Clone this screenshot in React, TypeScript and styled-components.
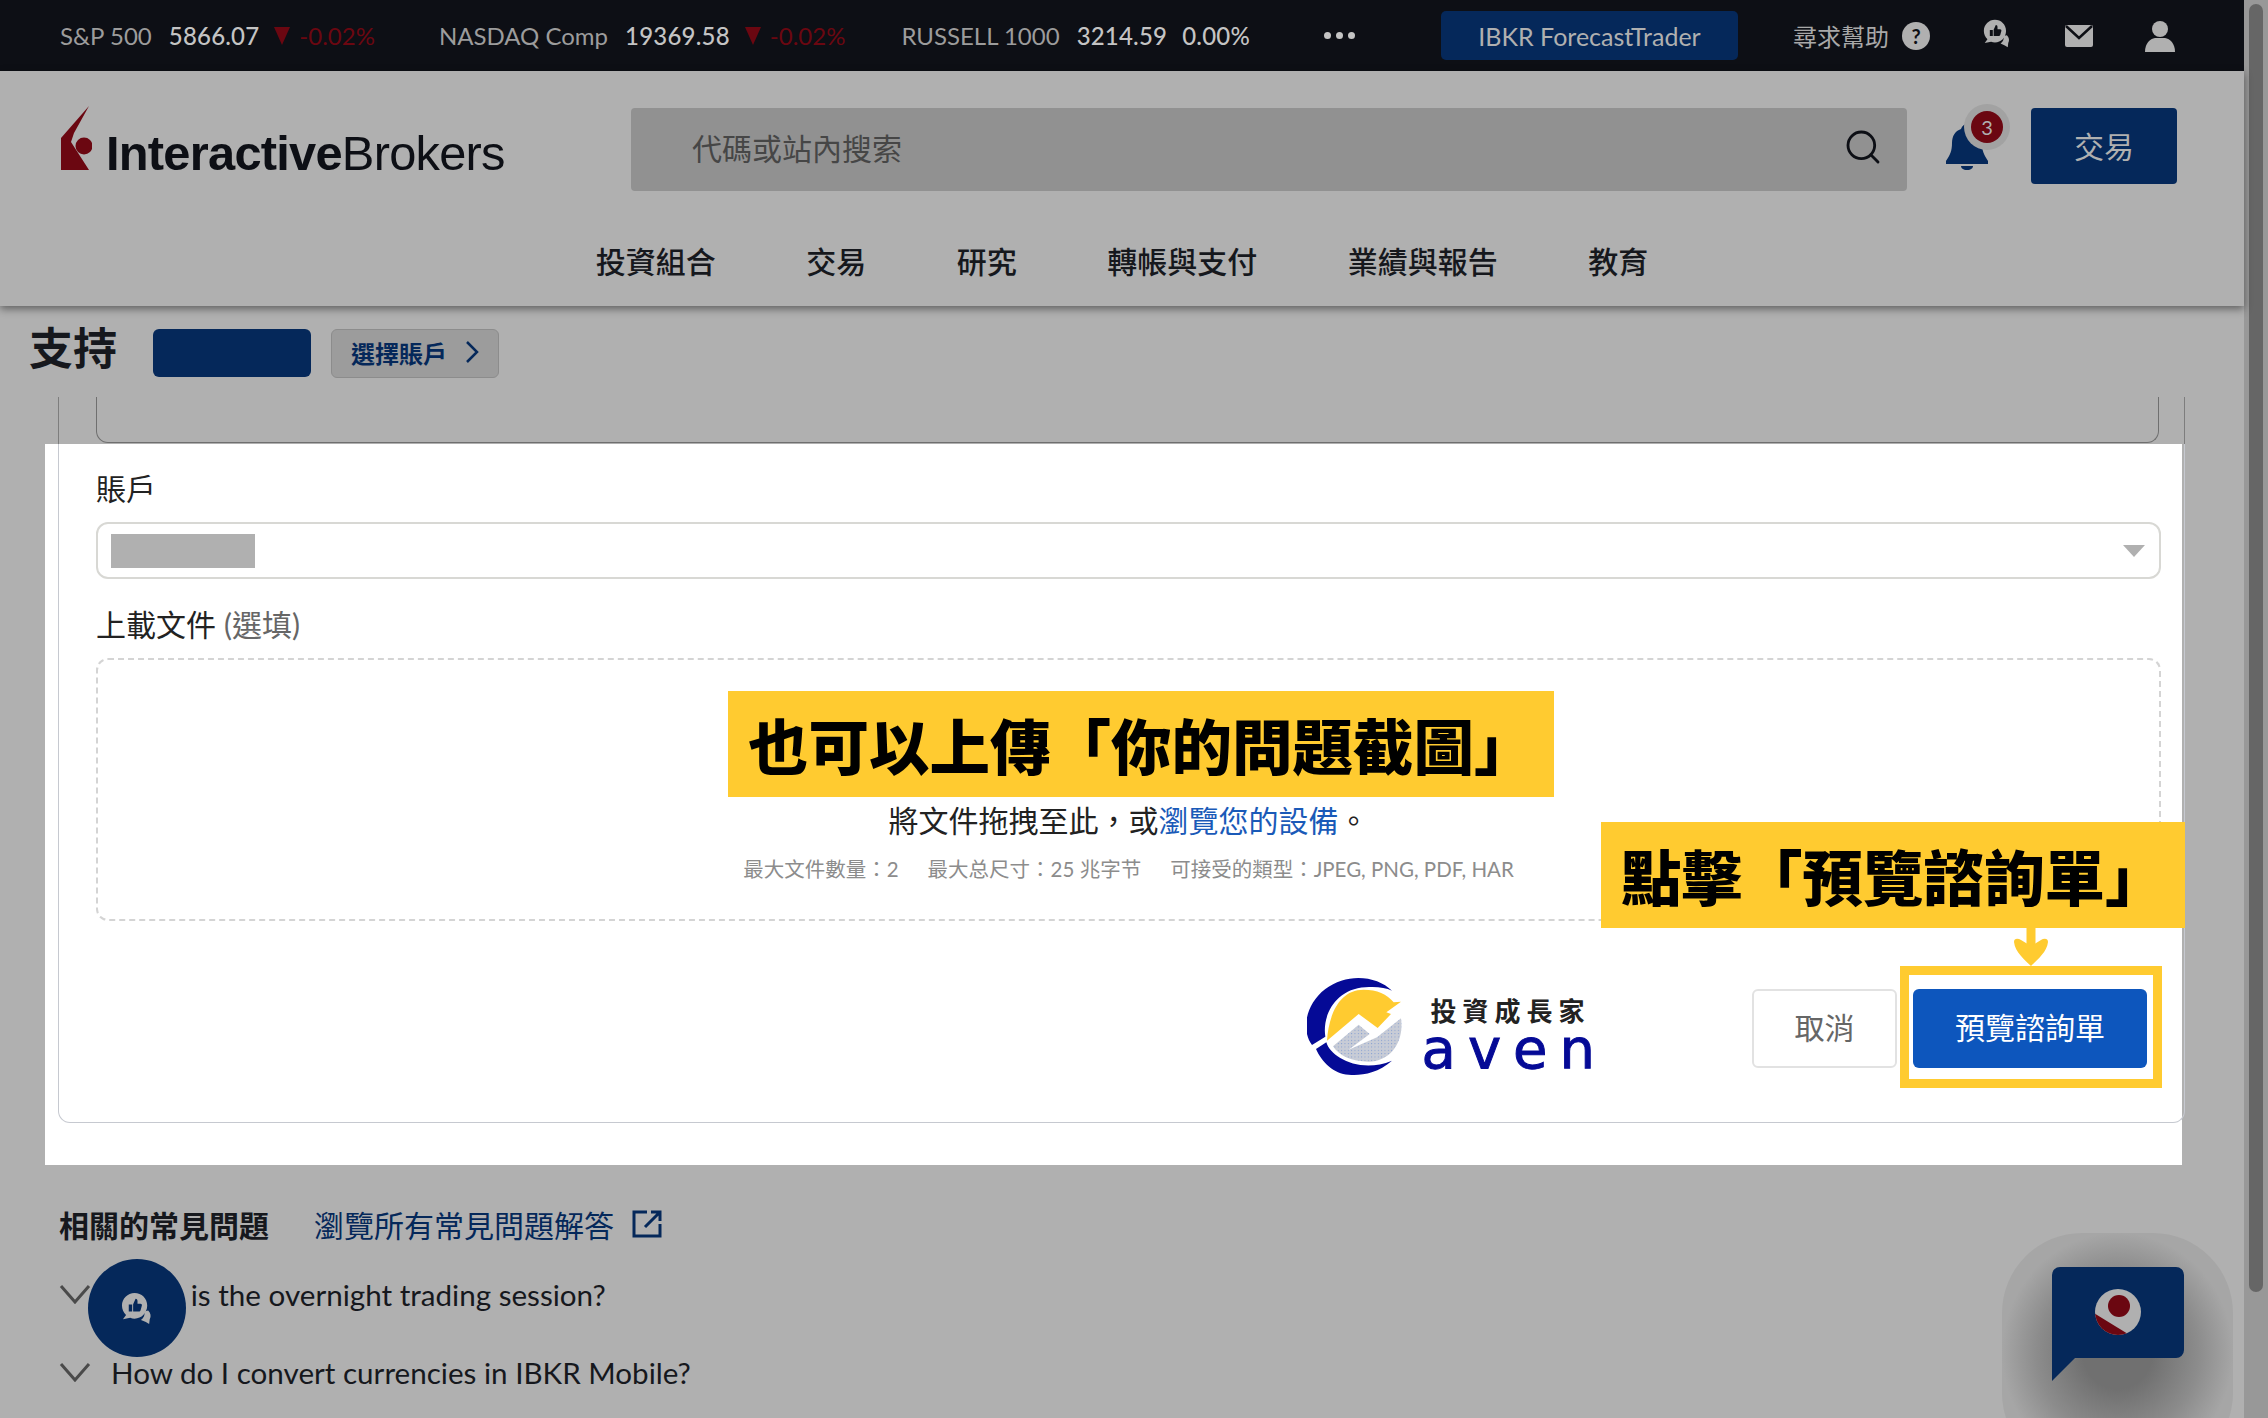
import React from "react";
import styled, { createGlobalStyle } from "styled-components";
import { Search } from "lucide-react";

const DIM = "#b0b0b0";
const NAVY = "#05285a";
const RED = "#6b0711";
const YELLOW = "#ffcb30";
const FONT = `Lato, "Noto Sans CJK TC", sans-serif`;

const GlobalStyle = createGlobalStyle`
  html, body {
    margin: 0;
    padding: 0;
    height: 1418px;
    overflow: hidden;
    background: ${DIM};
    font-family: ${FONT};
  }
  * { box-sizing: border-box; }
`;

const Page = styled.div`
  position: relative;
  display: flex;
  width: 2268px;
  height: 1418px;
  overflow: hidden;
`;

const Content = styled.div`
  width: 2244px;
  display: flex;
  flex-direction: column;
`;

const ScrollTrack = styled.div`
  width: 24px;
  height: 100%;
  background: #989898;
  padding: 4px 5px 0;
`;

const ScrollThumb = styled.div`
  width: 14px;
  height: 1288px;
  border-radius: 7px;
  background: #666;
`;

/* top ticker bar */
const TopBar = styled.div`
  height: 71px;
  flex: none;
  background: #0d0f15;
  display: flex;
  align-items: center;
  padding: 0 68px 0 60px;
  font-size: 24px;
  color: #9c9c9c;
  white-space: nowrap;
`;

const Ticker = styled.div<{ $after: number }>`
  display: flex;
  align-items: center;
  gap: 15px;
  margin-right: ${(p) => p.$after}px;
  flex: none;
`;

const TickerName = styled.span`
  margin-right: 2px;
`;

const TickerValue = styled.span`
  color: #c4c4c4;
  font-weight: 500;
  letter-spacing: 0.2px;
`;

const TickerChange = styled.span`
  color: ${RED};
  margin-left: -6px;
`;

const DownMark = styled.span`
  width: 0;
  height: 0;
  border-left: 8px solid transparent;
  border-right: 8px solid transparent;
  border-top: 18px solid ${RED};
`;

const Dots = styled.div`
  display: flex;
  flex: none;
  gap: 5px;
  margin-left: auto;
  margin-right: 86px;
`;

const Dot = styled.span`
  width: 7px;
  height: 7px;
  border-radius: 50%;
  background: #c4c4c4;
`;

const ForecastButton = styled.div`
  width: 297px;
  height: 49px;
  flex: none;
  background: ${NAVY};
  color: ${DIM};
  border-radius: 5px;
  display: flex;
  align-items: center;
  justify-content: center;
  font-size: 25px;
`;

const HelpText = styled.span`
  margin-left: 55px;
  color: #a8a8a8;
  font-size: 24px;
  flex: none;
`;

const HelpBadge = styled.span`
  margin-left: 13px;
  width: 28px;
  height: 28px;
  flex: none;
  border-radius: 50%;
  background: ${DIM};
  color: #0d0f15;
  font-size: 20px;
  font-weight: 700;
  display: flex;
  align-items: center;
  justify-content: center;
`;

const TopIcon = styled.svg<{ $left: number }>`
  margin-left: ${(p) => p.$left}px;
  flex: none;
`;

/* main header */
const Header = styled.header`
  height: 235px;
  flex: none;
  background: ${DIM};
  box-shadow: 0 3px 8px rgba(0, 0, 0, 0.45);
  position: relative;
  display: flex;
  flex-direction: column;
`;

const HeaderRow = styled.div`
  display: flex;
  align-items: flex-start;
  padding: 37px 68px 0 60px;
`;

const Logo = styled.div`
  width: 571px;
  flex: none;
  display: flex;
  align-items: flex-end;
  height: 65px;
  gap: 14px;
  margin-top: -2px;
`;

const LogoText = styled.div`
  font-family: "Liberation Sans", Arial, sans-serif;
  font-size: 48.8px;
  line-height: 36px;
  letter-spacing: -0.75px;
  color: #0d0f15;
  white-space: nowrap;
  b { font-weight: 700; }
`;

const SearchBox = styled.div`
  width: 1276px;
  height: 83px;
  flex: none;
  background: #919191;
  border-radius: 4px;
  display: flex;
  align-items: center;
  justify-content: space-between;
  padding: 0 24px 5px 61px;
  color: #464646;
  font-size: 30px;
  svg { color: #0d0f15; }
`;

const BellWrap = styled.div`
  position: relative;
  width: 60px;
  height: 62px;
  margin: 16px 0 0 38px;
  flex: none;
`;

const BellBadge = styled.span`
  position: absolute;
  left: 26px;
  top: -13px;
  width: 32px;
  height: 32px;
  border-radius: 50%;
  background: ${RED};
  box-shadow: 0 0 0 7px #a2a2a2;
  color: ${DIM};
  font-size: 20px;
  display: flex;
  align-items: center;
  justify-content: center;
`;

const TradeButton = styled.div`
  width: 146px;
  height: 76px;
  margin-left: 26px;
  padding-bottom: 3px;
  flex: none;
  background: ${NAVY};
  color: ${DIM};
  border-radius: 4px;
  font-size: 30px;
  display: flex;
  align-items: center;
  justify-content: center;
`;

const Nav = styled.nav`
  display: flex;
  justify-content: center;
  gap: 90.5px;
  margin-top: 48px;
  font-size: 30px;
  font-weight: 500;
  line-height: 44px;
  color: #16181d;
`;

/* sub header */
const SubHeader = styled.div`
  height: 91px;
  flex: none;
  display: flex;
  align-items: flex-start;
  padding: 23px 0 0 29px;
`;

const PageTitle = styled.h1`
  margin: -10px 0 0;
  font-size: 44px;
  line-height: 58px;
  font-weight: 700;
  color: #16181d;
`;

const AccountBlock = styled.div`
  width: 158px;
  height: 48px;
  margin-left: 36px;
  background: ${NAVY};
  border-radius: 6px;
`;

const AccountSelect = styled.div`
  width: 168px;
  height: 49px;
  margin-left: 20px;
  padding: 0 0 3px 19px;
  background: #9c9c9c;
  border: 1px solid #8c8c8c;
  border-radius: 6px;
  color: ${NAVY};
  font-size: 24px;
  font-weight: 700;
  display: flex;
  align-items: center;
  gap: 18px;
`;

/* grey stub of the form above the white hole */
const Stub = styled.div`
  height: 47px;
  flex: none;
  margin: 0 59px 0 58px;
  padding: 0 25px 0 37px;
  border-left: 1px solid #7d7d7d;
  border-right: 1px solid #7d7d7d;
`;

const StubBox = styled.div`
  height: 46px;
  border: 1px solid #6f6f6f;
  border-top: none;
  border-radius: 0 0 12px 12px;
`;

const WhitePanel = styled.div`
  height: 721px;
  flex: none;
  margin: 0 62px 0 45px;
  background: #fff;
  display: flex;
  align-items: flex-start;
  padding-left: 13px;
`;

const Card = styled.div`
  width: 2127px;
  height: 679px;
  flex: none;
  margin-right: -3px;
  border: 1px solid #c6c9d0;
  border-top: none;
  border-radius: 0 0 12px 12px;
  padding: 24px 23px 0 37px;
`;

const FieldLabel = styled.div`
  font-size: 30px;
  line-height: 40px;
  color: #222;
`;

const OptionalMark = styled.span`
  color: #666;
  font-size: 30px;
  margin-left: 8px;
`;

const SelectField = styled.div`
  height: 57px;
  margin: 14px 0 25px;
  border: 2px solid #d8d8d4;
  border-radius: 12px;
  display: flex;
  align-items: center;
  justify-content: space-between;
  padding: 0 14px 0 13px;
`;

const RedactedValue = styled.div`
  width: 144px;
  height: 34px;
  background: ${DIM};
`;

const Caret = styled.span`
  width: 0;
  height: 0;
  border-left: 11px solid transparent;
  border-right: 11px solid transparent;
  border-top: 12px solid #b0b0b0;
`;

const DropZone = styled.div`
  height: 263px;
  margin-top: 14px;
  border: 2px dashed #d4d4d4;
  border-radius: 12px;
  display: flex;
  flex-direction: column;
  align-items: center;
  padding-top: 139px;
`;

const DropText = styled.div`
  font-size: 30px;
  line-height: 42px;
  color: #222;
`;

const DropLink = styled.span`
  color: #1a5ab8;
`;

const DropHints = styled.div`
  display: flex;
  gap: 29px;
  margin-top: 13px;
  font-size: 20.5px;
  line-height: 30px;
  color: #8c8c8c;
`;

const ActionRow = styled.div`
  display: flex;
  align-items: flex-start;
  margin-top: 68px;
  justify-content: flex-end;
  padding-right: 14px;
`;

const AvenLogo = styled.div`
  display: flex;
  align-items: flex-start;
  margin: -12px 145px 0 0;
  gap: 29px;
`;

const AvenWords = styled.div`
  display: flex;
  flex-direction: column;
  margin-top: 19px;
`;

const AvenSlogan = styled.div`
  font-size: 26px;
  line-height: 30px;
  font-weight: 700;
  letter-spacing: 6px;
  color: #222;
`;

const AvenMark = styled.div`
  font-family: "DejaVu Sans", sans-serif;
  font-size: 56px;
  line-height: 46px;
  letter-spacing: 12px;
  color: #050a96;
  -webkit-text-stroke: 1px #050a96;
  margin-left: -9px;
`;

const CancelButton = styled.div`
  width: 145px;
  height: 79px;
  padding-bottom: 6px;
  border: 2px solid #e2e2e2;
  border-radius: 6px;
  color: #666;
  font-size: 30px;
  display: flex;
  align-items: center;
  justify-content: center;
`;

const PreviewButton = styled.div`
  width: 234px;
  height: 79px;
  padding-bottom: 6px;
  margin-left: 16px;
  background: #0d56bd;
  color: #fff;
  border-radius: 6px;
  font-size: 30px;
  display: flex;
  align-items: center;
  justify-content: center;
`;

/* faq list under the hole */
const Faq = styled.section`
  padding: 39px 0 0 59px;
`;

const FaqHead = styled.div`
  display: flex;
  align-items: center;
  height: 40px;
  font-size: 30px;
`;

const FaqTitle = styled.div`
  font-weight: 700;
  color: #16181d;
  margin-right: 45px;
`;

const FaqLink = styled.div`
  color: ${NAVY};
  margin-right: 18px;
`;

const FaqRow = styled.div<{ $gap: number }>`
  display: flex;
  align-items: center;
  height: 40px;
  margin-top: ${(p) => p.$gap}px;
  gap: 20px;
  font-size: 29.6px;
  color: #16181d;
`;

/* floating things */
const FloatCircle = styled.div`
  position: absolute;
  left: 88px;
  top: 1259px;
  width: 98px;
  height: 98px;
  border-radius: 50%;
  background: ${NAVY};
  display: flex;
  align-items: center;
  justify-content: center;
`;

const ChatHalo = styled.div`
  position: absolute;
  left: 2002px;
  top: 1233px;
  width: 231px;
  height: 240px;
  border-radius: 80px;
  background: radial-gradient(closest-side, #707070 30%, #8c8c8c 70%, #a6a6a6 100%);
`;

const ChatBubble = styled.svg`
  position: absolute;
  left: 2052px;
  top: 1267px;
`;

const Callout = styled.div<{ $left: number; $top: number; $width: number }>`
  position: absolute;
  left: ${(p) => p.$left}px;
  top: ${(p) => p.$top}px;
  width: ${(p) => p.$width}px;
  height: 106px;
  background: ${YELLOW};
  color: #000;
  font-family: "Noto Sans CJK TC", sans-serif;
  font-weight: 900;
  font-size: 60.5px;
  line-height: 106px;
  white-space: nowrap;
  padding-left: 20px;
`;

const Highlight = styled.div`
  position: absolute;
  left: 1900px;
  top: 966px;
  width: 262px;
  height: 122px;
  border: 9px solid ${YELLOW};
`;

const CalloutArrow = styled.svg`
  position: absolute;
  left: 2013px;
  top: 928px;
`;

const ChatThumbIcon = ({ size, fg, bg }: { size: number; fg: string; bg: string }) => (
  <svg width={size} height={size} viewBox="0 0 34 34">
    <path
      d="M14 1C6.800 1 1 6.800 1 14c0 3.800 1.600 7.200 4.200 9.600L2 28l7.500-1.400c1.400.6 2.900.9 4.500.9 7.200 0 13-6 13-13.500S21.200 1 14 1z"
      fill={fg}
    />
    <path
      d="M24 20c.9 3.600-.5 6.500-3.400 8.800l5 2.200 3.400 2 .6-5c1.700-3 1-6.500-1.600-9z"
      fill={fg}
    />
    <path
      d="M8 13h3.500v7H8zM12.500 20v-7.500l2.500-5.500c1.500 0 2 1 2 2.400V12h3c1.200 0 1.800.9 1.500 2l-1.300 4.700c-.3.8-.9 1.300-1.700 1.300z"
      fill={bg}
    />
  </svg>
);

const ExternalIcon = () => (
  <svg width="30" height="28" viewBox="0 0 30 28" fill="none" stroke={NAVY} strokeWidth="3">
    <path d="M15 2H2v24h26V14" />
    <path d="M13 17 28 2M19 2h9v9" />
  </svg>
);

const FaqChevron = () => (
  <svg width="32" height="20" viewBox="0 0 32 20" fill="none" stroke="#4a4a4a" strokeWidth="3">
    <path d="M2 2l14 16L30 2" />
  </svg>
);

const tickers = [
  { name: "S&P 500", value: "5866.07", change: "-0.02%", down: true, after: 64 },
  { name: "NASDAQ Comp", value: "19369.58", change: "-0.02%", down: true, after: 56 },
  { name: "RUSSELL 1000", value: "3214.59", change: "0.00%", down: false, after: 0 },
];

const navItems = ["投資組合", "交易", "研究", "轉帳與支付", "業績與報告", "教育"];

const App = () => {
  return (
    <Page>
      <GlobalStyle />
      <Content>
        <TopBar>
          {tickers.map((t) => (
            <Ticker key={t.name} $after={t.after}>
              <TickerName>{t.name}</TickerName>
              <TickerValue>{t.value}</TickerValue>
              {t.down && <DownMark />}
              {t.down ? <TickerChange>{t.change}</TickerChange> : <TickerValue>{t.change}</TickerValue>}
            </Ticker>
          ))}
          <Dots>
            <Dot />
            <Dot />
            <Dot />
          </Dots>
          <ForecastButton>IBKR ForecastTrader</ForecastButton>
          <HelpText>尋求幫助</HelpText>
          <HelpBadge>?</HelpBadge>
          <TopIcon as="div" $left={53}>
            <ChatThumbIcon size={29} fg={DIM} bg="#0d0f15" />
          </TopIcon>
          <TopIcon $left={53} width="28" height="22" viewBox="0 0 28 22">
            <rect width="28" height="22" rx="2" fill={DIM} />
            <path d="M1 1l13 12L27 1" fill="none" stroke="#0d0f15" strokeWidth="2.500" />
          </TopIcon>
          <TopIcon $left={51} width="32" height="32" viewBox="0 0 32 32">
            <circle cx="16" cy="9" r="8" fill={DIM} />
            <path d="M1 32c0-9 5-13 10-14h10c5 1 10 5 10 14z" fill={DIM} />
          </TopIcon>
        </TopBar>

        <Header>
          <HeaderRow>
            <Logo>
              <svg width="32" height="65" viewBox="0 0 32 65">
                <path d="M29 0 1 32v32h28L11 36l3-9z" fill={RED} />
                <circle cx="24" cy="40" r="8.500" fill={RED} />
              </svg>
              <LogoText>
                <b>Interactive</b>Brokers
              </LogoText>
            </Logo>
            <SearchBox>
              <span>代碼或站內搜索</span>
              <Search size={40} strokeWidth={1.7} />
            </SearchBox>
            <BellWrap>
              <svg width="44" height="46" viewBox="0 0 44 46">
                <path
                  d="M22 0c3 0 5 2 6 5 6 2 9 7 9 14 0 8 2 12 6 18v3H1v-3c4-6 6-10 6-18 0-7 3-12 9-14 1-3 3-5 6-5z"
                  fill={NAVY}
                />
                <path d="M16 42h12c0 2-2 4-6 4s-6-2-6-4z" fill={NAVY} />
              </svg>
              <BellBadge>3</BellBadge>
            </BellWrap>
            <TradeButton>交易</TradeButton>
          </HeaderRow>
          <Nav>
            {navItems.map((n) => (
              <span key={n}>{n}</span>
            ))}
          </Nav>
        </Header>

        <SubHeader>
          <PageTitle>支持</PageTitle>
          <AccountBlock />
          <AccountSelect>
            選擇賬戶
            <svg width="14" height="22" viewBox="0 0 14 22" fill="none" stroke={NAVY} strokeWidth="2.500">
              <path d="M2 1l10 10L2 21" />
            </svg>
          </AccountSelect>
        </SubHeader>

        <Stub>
          <StubBox />
        </Stub>

        <WhitePanel>
          <Card>
            <FieldLabel>賬戶</FieldLabel>
            <SelectField>
              <RedactedValue />
              <Caret />
            </SelectField>
            <FieldLabel>
              上載文件<OptionalMark>(選填)</OptionalMark>
            </FieldLabel>
            <DropZone>
              <DropText>
                將文件拖拽至此，或<DropLink>瀏覽您的設備</DropLink>。
              </DropText>
              <DropHints>
                <span>最大文件數量：2</span>
                <span>最大总尺寸：25 兆字节</span>
                <span>可接受的類型：JPEG, PNG, PDF, HAR</span>
              </DropHints>
            </DropZone>
            <ActionRow>
              <AvenLogo>
                <svg width="95" height="98" viewBox="80 55 285 292">
                  <defs>
                    <pattern id="avenDots" width="10" height="10" patternUnits="userSpaceOnUse">
                      <rect width="10" height="10" fill="#c8ccd6" />
                      <circle cx="4" cy="4" r="1.500" fill="#6f8fd0" />
                    </pattern>
                  </defs>
                  <path d="M335 95C290 50 200 40 135 90 70 140 65 220 95 258l40-25c-10-63 30-143 120-148 30-3 60 0 80 10z" fill="#050a96" />
                  <path d="M107 270l31-20c12 45 102 95 197 55-45 40-95 45-130 42-45-2-80-37-98-77z" fill="#050a96" />
                  <path d="M140 245c5-75 35-153 110-153 40 0 70 13 90 38l22-2-44 32 14 5-40 42-57-42z" fill={YELLOW} />
                  <path d="M158 262l77-65 33 28-63 47 85-37 72-57c10 72-32 130-97 130-50 0-90-18-107-46z" fill="url(#avenDots)" />
                </svg>
                <AvenWords>
                  <AvenSlogan>投資成長家</AvenSlogan>
                  <AvenMark>aven</AvenMark>
                </AvenWords>
              </AvenLogo>
              <CancelButton>取消</CancelButton>
              <PreviewButton>預覽諮詢單</PreviewButton>
            </ActionRow>
          </Card>
        </WhitePanel>

        <Faq>
          <FaqHead>
            <FaqTitle>相關的常見問題</FaqTitle>
            <FaqLink>瀏覽所有常見問題解答</FaqLink>
            <ExternalIcon />
          </FaqHead>
          <FaqRow $gap={30}>
            <FaqChevron />
            <span>What is the overnight trading session?</span>
          </FaqRow>
          <FaqRow $gap={38}>
            <FaqChevron />
            <span>How do I convert currencies in IBKR Mobile?</span>
          </FaqRow>
        </Faq>
      </Content>
      <ScrollTrack>
        <ScrollThumb />
      </ScrollTrack>

      <FloatCircle>
        <ChatThumbIcon size={33} fg={DIM} bg={NAVY} />
      </FloatCircle>

      <ChatHalo />
      <ChatBubble width="132" height="114" viewBox="0 0 132 114">
        <defs>
          <clipPath id="ibDisc">
            <circle cx="66" cy="45" r="23" />
          </clipPath>
        </defs>
        <path d="M8 0h116a8 8 0 0 1 8 8v75a8 8 0 0 1-8 8H23L0 114V8a8 8 0 0 1 8-8z" fill={NAVY} />
        <circle cx="66" cy="45" r="23" fill={DIM} />
        <path d="M40 45l36 22-10 10-30-10z" fill={RED} clipPath="url(#ibDisc)" />
        <circle cx="67" cy="39" r="11" fill={RED} />
      </ChatBubble>

      <Callout $left={728} $top={691} $width={826}>
        也可以上傳「你的問題截圖」
      </Callout>
      <Callout $left={1601} $top={822} $width={584}>
        點擊「預覽諮詢單」
      </Callout>
      <CalloutArrow width="36" height="40" viewBox="0 0 36 40">
        <path d="M18 0v30" stroke={YELLOW} strokeWidth="9" />
        <path d="M1 14C1 10 5 10 8 12l10 6 10-6c3-2 7-2 7 2-1 10-11 18-17 24C12 32 2 24 1 14z" fill={YELLOW} />
      </CalloutArrow>
      <Highlight />
    </Page>
  );
};

export default App;
